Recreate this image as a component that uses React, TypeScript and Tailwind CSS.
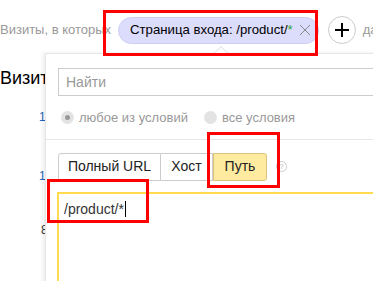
import React from "react";

const Radio = ({ checked, label }: { checked?: boolean; label: string }) => (
  <label className="flex items-center gap-[5px] text-[13px] text-[#999]">
    <span className="flex h-[13px] w-[13px] items-center justify-center rounded-full bg-[#e3e3e3]">
      {checked && <span className="h-[5px] w-[5px] rounded-full bg-[#999]"></span>}
    </span>
    {label}
  </label>
);

const App = () => {
  return (
    <div className="relative h-[281px] w-[373px] overflow-hidden bg-white font-['Liberation_Sans',Arial,sans-serif]">
      {/* Filter bar */}
      <div className="flex items-center whitespace-nowrap pt-[16px]">
        <span className="w-[118px] shrink-0 overflow-hidden text-[13px] text-[#999]">Визиты, в которых</span>
        <span className="flex h-[27px] shrink-0 items-center rounded-full border border-[#cdcdf3] bg-[#dcdcfc] pl-[11px] pr-[7px] text-[13.2px] text-black">
          Страница входа: /product/<span className="text-[#2fa52f]">*</span>
          <svg className="ml-[6px]" width="12" height="12" viewBox="0 0 12 12" stroke="#888" strokeWidth="1">
            <path d="M1 1l10 10M11 1L1 11" />
          </svg>
        </span>
        <span className="ml-[9px] flex h-[28px] w-[28px] shrink-0 items-center justify-center rounded-full border border-[#ccc]">
          <svg width="14" height="14" viewBox="0 0 14 14" stroke="#000" strokeWidth="2">
            <path d="M7 0v14M0 7h14" />
          </svg>
        </span>
        <span className="ml-[7px] text-[13px] text-[#999]">да</span>
      </div>

      {/* Page content under the popup */}
      <div className="mt-[23px] text-[18px] leading-[22px] text-black">Визиты</div>
      <div className="ml-[39px] mt-[19px] text-[12px] text-[#1a64b8]">12</div>
      <div className="ml-[39px] mt-[41px] text-[12px] text-[#1a64b8]">10</div>
      <div className="ml-[41px] mt-[36px] text-[12px] text-[#333]">8</div>

      {/* Popup */}
      <div className="absolute left-[45px] top-[53px] h-[260px] w-[360px] border border-[#e6e6e6] bg-white shadow-[-2px_0_4px_rgba(0,0,0,0.08)]">
        <div className="absolute left-[170px] top-[-6px] h-[10px] w-[10px] rotate-45 border-l border-t border-[#e6e6e6] bg-white"></div>
        <div className="px-[12px] pt-[14px]">
          <div className="flex h-[28px] items-center border border-[#ccc] px-[7px] text-[14px] text-[#999]">Найти</div>
          <div className="mt-[12px] flex items-center gap-[16px] pl-[3px]">
            <Radio checked label="любое из условий" />
            <Radio label="все условия" />
          </div>
        </div>
        <div className="mt-[11px] border-t border-[#e6e6e6]"></div>
        <div className="px-[12px] pt-[13px]">
          <div className="flex items-center">
            <span className="flex h-[28px] w-[103px] items-center justify-center rounded-l-[3px] border border-[#ccc] text-[14px] text-[#222]">Полный URL</span>
            <span className="flex h-[28px] w-[52px] items-center justify-center border-y border-r border-[#ccc] text-[14px] text-[#222]">Хост</span>
            <span className="flex h-[28px] w-[54px] items-center justify-center rounded-r-[3px] border border-[#dcc27a] bg-[#ffeba0] text-[14px] text-[#222]">Путь</span>
            <span className="ml-[9px] flex h-[11px] w-[11px] items-center justify-center rounded-full border border-[#ccc] text-[8px] leading-none text-[#bbb]">?</span>
          </div>
          <div className="-ml-[1px] mt-[11px] h-[120px] border-2 border-[#ffdb4d] px-[5px] pt-[4px] text-[14px] leading-[20px] text-[#333]">
            /product/*<span className="ml-[1px] inline-block h-[16px] w-[1px] translate-y-[3px] bg-black"></span>
          </div>
        </div>
      </div>

      {/* Red annotation boxes */}
      <div className="absolute left-[103px] top-[10px] h-[46px] w-[215px] border-[3px] border-[#ff0000]"></div>
      <div className="absolute left-[207px] top-[132px] h-[56px] w-[73px] border-[3px] border-[#ff0000]"></div>
      <div className="absolute left-[47px] top-[179px] h-[44px] w-[102px] border-[3px] border-[#ff0000]"></div>
    </div>
  );
};

export default App;
